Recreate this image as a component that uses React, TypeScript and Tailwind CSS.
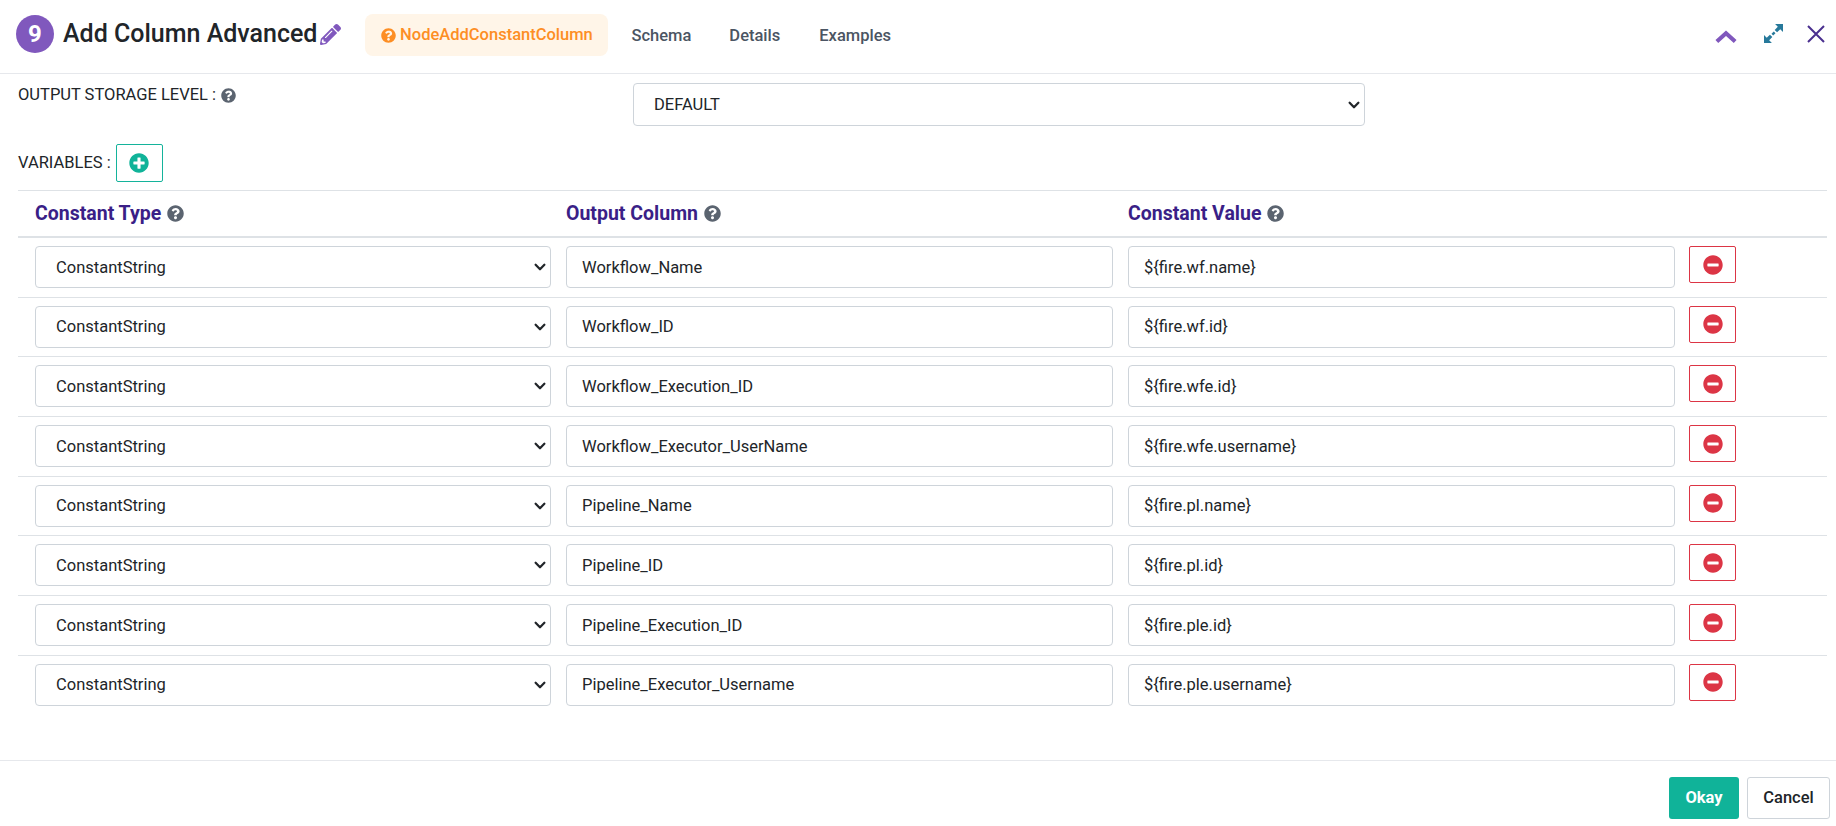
import React from "react";

const rows = [
  ["Workflow_Name", "${fire.wf.name}"],
  ["Workflow_ID", "${fire.wf.id}"],
  ["Workflow_Execution_ID", "${fire.wfe.id}"],
  ["Workflow_Executor_UserName", "${fire.wfe.username}"],
  ["Pipeline_Name", "${fire.pl.name}"],
  ["Pipeline_ID", "${fire.pl.id}"],
  ["Pipeline_Execution_ID", "${fire.ple.id}"],
  ["Pipeline_Executor_Username", "${fire.ple.username}"],
];

function Question({ className }: { className: string }) {
  return (
    <svg viewBox="0 0 512 512" className={className} fill="currentColor">
      <path d="M504 256c0 137-111 248-248 248S8 393 8 256 119 8 256 8s248 111 248 248zM262.700 90c-54.500 0-89.300 23-116.500 63.800-3.500 5.300-2.400 12.400 2.700 16.300l34.700 26.300c5.200 3.900 12.600 3 16.700-2.100 17.900-22.700 30.100-35.800 57.300-35.800 20.400 0 45.700 13.100 45.700 33 0 15-12.400 22.700-32.600 34-23.600 13.200-54.800 29.700-54.800 70.900V300c0 6.600 5.400 12 12 12h56c6.600 0 12-5.400 12-12v-1.300c0-28.600 83.400-29.700 83.400-107 0-58.200-60.400-102.300-116.600-102.300zM256 339c-25.500 0-46.200 20.700-46.200 46.200 0 25.400 20.700 46.200 46.200 46.200s46.200-20.700 46.200-46.200S281.500 339 256 339z" />
    </svg>
  );
}

function Select({ value, className }: { value: string; className: string }) {
  return (
    <div className={`relative flex items-center rounded-[4px] border border-[#ced4da] bg-white pl-[20px] text-[16.500px] text-[#212529] ${className}`}>
      <span className="translate-y-[1px]">{value}</span>
      <svg viewBox="0 0 16 16" className="absolute right-[3px] h-[14px] w-[14px]" fill="none" stroke="#212529" strokeWidth="2.600" strokeLinecap="round" strokeLinejoin="round">
        <path d="M3 5.500l5 5 5-5" />
      </svg>
    </div>
  );
}

function TextBox({ value }: { value: string }) {
  return (
    <div className="flex h-[42px] w-[547px] items-center rounded-[4px] border border-[#ced4da] bg-white pl-[15px] text-[16.500px] text-[#212529]">
      <span className="translate-y-[1px]">{value}</span>
    </div>
  );
}

function HeaderCell({ label, className }: { label: string; className: string }) {
  return (
    <div className={`flex items-center gap-[6px] text-[19.500px] font-bold text-[#3a1f87] ${className}`}>
      {label}
      <Question className="h-[17px] w-[17px] text-[#5b6470]" />
    </div>
  );
}

export default function App() {
  return (
    <div className="flex h-[826px] w-[1836px] flex-col overflow-hidden bg-white font-['Roboto',sans-serif] text-[#212529]">
      <header className="flex h-[74px] shrink-0 items-center border-b border-[#e6e8ec] pb-[4px] pl-[16px] pr-[10px]">
        <div className="flex h-[38px] w-[38px] -translate-y-[1px] items-center justify-center rounded-full bg-[#8058bd] text-[24px] font-bold text-white">9</div>
        <div className="ml-[9px] -translate-y-[1px] text-[25px] font-medium leading-none text-[#212529]">Add Column Advanced</div>
        <svg viewBox="0 0 512 512" className="ml-[3px] h-[21px] w-[21px] text-[#8058bd]" fill="currentColor">
          <path d="M497.900 142.100l-46.100 46.100c-4.700 4.700-12.300 4.700-17 0l-111-111c-4.700-4.700-4.700-12.300 0-17l46.100-46.100c18.700-18.700 49.100-18.700 67.900 0l60.100 60.100c18.800 18.700 18.800 49.100 0 67.900zM284.200 99.800L21.600 362.400.4 483.900c-2.900 16.400 11.400 30.600 27.800 27.800l121.500-21.300 262.600-262.600c4.700-4.700 4.700-12.300 0-17l-111-111c-4.800-4.700-12.400-4.700-17.100 0zM124.100 339.900c-5.500-5.500-5.500-14.300 0-19.800l154-154c5.500-5.500 14.300-5.500 19.800 0s5.500 14.300 0 19.800l-154 154c-5.500 5.500-14.300 5.500-19.800 0zM88 424h48v36.300l-64.500 11.300-31.100-31.100L51.700 376H88v48z" />
        </svg>
        <div className="ml-[24px] flex h-[42px] w-[243px] items-center justify-center gap-[4px] rounded-[8px] bg-[#fff5e8] text-[16.500px] font-medium text-[#fd8e24]">
          <Question className="h-[15px] w-[15px] translate-y-[1px]" />
          <span className="translate-y-[1px]">NodeAddConstantColumn</span>
        </div>
        <nav className="flex translate-y-[2px] items-center text-[16.500px] font-medium text-[#4b5563]">
          <span className="ml-[23px]">Schema</span>
          <span className="ml-[38px]">Details</span>
          <span className="ml-[39px]">Examples</span>
        </nav>
        <div className="ml-auto flex items-center">
          <svg viewBox="0 0 24 16" className="h-[16px] w-[22px] translate-y-[1px] text-[#8058bd]" fill="none" stroke="currentColor" strokeWidth="4.500">
            <path d="M2 14l10-9 10 9" />
          </svg>
          <svg viewBox="0 0 18 18" className="ml-[27px] h-[19px] w-[19px] -translate-y-[1px] text-[#27799b]" fill="currentColor">
            <path d="M10.500 0H18v7.500l-2.600-2.600-3 3-2.300-2.300 3-3zM7.500 18H0v-7.500l2.600 2.600 3-3 2.300 2.300-3 3zM7.100 9.300l2.200-2.200 1.600 1.600-2.200 2.200z" />
          </svg>
          <svg viewBox="0 0 20 20" className="ml-[23px] h-[20px] w-[20px] -translate-y-[1px] text-[#4a2f8f]" fill="none" stroke="currentColor" strokeWidth="2">
            <path d="M2 2l16 16M18 2L2 18" />
          </svg>
        </div>
      </header>

      <main className="flex-1 pl-[18px] pr-[9px]">
        <div className="flex h-[52px] items-start pt-[9px]">
          <div className="flex w-[615px] items-center gap-[5px] text-[16.500px] leading-[24px]">
            OUTPUT STORAGE LEVEL :
            <Question className="h-[15px] w-[15px] text-[#5b6470]" />
          </div>
          <Select value="DEFAULT" className="h-[43px] w-[732px]" />
        </div>

        <div className="mt-[18px] flex h-[38px] items-center gap-[5px] text-[16.500px]">
          VARIABLES :
          <div className="flex h-[38px] w-[47px] items-center justify-center rounded-[2px] border border-[#14b39b]">
            <svg viewBox="0 0 512 512" className="h-[20px] w-[20px] text-[#10b399]" fill="currentColor">
              <path d="M256 8C119 8 8 119 8 256s111 248 248 248 248-111 248-248S393 8 256 8zm144 276c0 6.600-5.400 12-12 12h-92v92c0 6.600-5.400 12-12 12h-56c-6.600 0-12-5.400-12-12v-92h-92c-6.600 0-12-5.400-12-12v-56c0-6.600 5.400-12 12-12h92v-92c0-6.600 5.400-12 12-12h56c6.600 0 12 5.400 12 12v92h92c6.600 0 12 5.400 12 12v56z" />
            </svg>
          </div>
        </div>

        <div className="mt-[8px] flex h-[48px] items-center border-y border-b-2 border-[#dee2e6] px-[17px]">
          <HeaderCell label="Constant Type" className="w-[531px]" />
          <HeaderCell label="Output Column" className="w-[562px]" />
          <HeaderCell label="Constant Value" className="" />
        </div>

        {rows.map(([column, value], i) => (
          <div key={column} className={`flex h-[59.700px] items-start gap-[15px] border-[#dee2e6] px-[17px] pt-[8px] ${i < rows.length - 1 ? "border-b" : ""}`}>
            <Select value="ConstantString" className="h-[42px] w-[516px]" />
            <TextBox value={column} />
            <TextBox value={value} />
            <div className="-ml-[1px] flex h-[37px] w-[47px] shrink-0 items-center justify-center rounded-[2px] border border-[#dc3545]">
              <svg viewBox="0 0 512 512" className="h-[20px] w-[20px] text-[#dc3545]" fill="currentColor">
                <path d="M256 8C119 8 8 119 8 256s111 248 248 248 248-111 248-248S393 8 256 8zM124 296c-6.600 0-12-5.400-12-12v-56c0-6.600 5.400-12 12-12h264c6.600 0 12 5.400 12 12v56c0 6.600-5.400 12-12 12H124z" />
              </svg>
            </div>
          </div>
        ))}
      </main>

      <footer className="flex h-[66px] shrink-0 items-start justify-end gap-[8px] border-t border-[#e6e8ec] pr-[6px] pt-[16px]">
        <div className="flex h-[42px] w-[70px] items-center justify-center rounded-[3px] bg-[#10b399] text-[16.500px] font-bold text-white">Okay</div>
        <div className="flex h-[42px] w-[83px] items-center justify-center rounded-[3px] border border-[#ced4da] text-[16.500px] font-medium">Cancel</div>
      </footer>
    </div>
  );
}
